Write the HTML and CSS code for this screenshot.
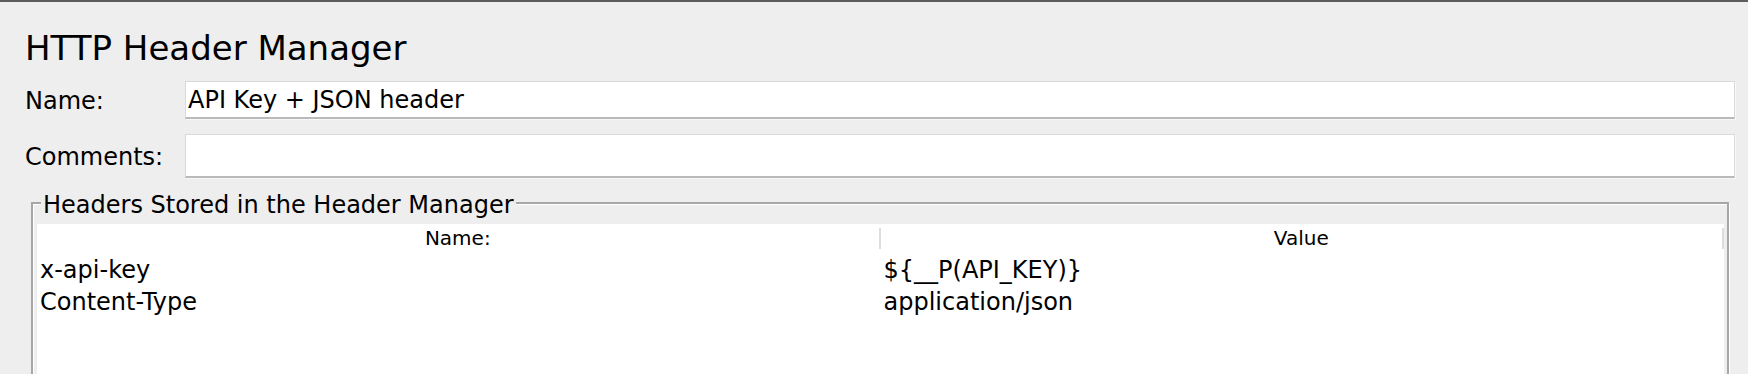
FILE: index.html
```html
<!DOCTYPE html>
<html lang="en">
<head>
<meta charset="utf-8">
<title>HTTP Header Manager</title>
<link rel="stylesheet" href="styles.css">
</head>
<body>
<div class="window">
  <h1 class="title">HTTP Header Manager</h1>
  <div class="form-row">
    <label class="label">Name:</label>
    <div class="field field-name">API Key + JSON header</div>
  </div>
  <div class="form-row">
    <label class="label">Comments:</label>
    <div class="field field-comments"></div>
  </div>
  <section class="group">
    <span class="group-title">Headers Stored in the Header Manager</span>
    <div class="table">
      <div class="thead">
        <div class="th"><span>Name:</span></div>
        <div class="th"><span>Value</span></div>
      </div>
      <div class="tr">
        <div class="td">x-api-key</div>
        <div class="td">${__P(API_KEY)}</div>
      </div>
      <div class="tr">
        <div class="td">Content-Type</div>
        <div class="td">application/json</div>
      </div>
    </div>
  </section>
</div>
</body>
</html>
```
FILE: styles.css
```css
html, body {
  margin: 0;
  height: 100%;
  overflow: hidden;
}

body {
  background: #eeeeee;
  font-family: "DejaVu Sans", "Liberation Sans", sans-serif;
  color: #000;
}

.window {
  box-sizing: border-box;
  height: 374px;
  overflow: hidden;
  border-top: 2px solid #5c5c5c;
  padding: 0 13px 0 25px;
}

.title {
  margin: 27px 0 0;
  font-size: 34px;
  font-weight: normal;
  line-height: 38px;
}

.form-row {
  display: flex;
  align-items: center;
  margin-top: 14px;
}

.form-row + .form-row {
  margin-top: 15px;
}

.label {
  flex: none;
  width: 160px;
  font-size: 24px;
  padding-top: 1px;
}

.field {
  flex: 1;
  display: flex;
  align-items: center;
  box-sizing: border-box;
  background: #fff;
  border: 1px solid #d9d9d9;
  border-bottom: 2px solid #bababa;
  box-shadow: 1px 1px 0 #f8f8f8;
  padding: 1px 0 0 2px;
  font-size: 24px;
}

.field-name {
  height: 38px;
}

.field-comments {
  height: 44px;
}

.group {
  position: relative;
  margin: 24px 6px 0;
  border: 2px solid #a6a6a6;
  box-shadow: inset 1px 1px 0 #fff, 1px 1px 0 #fff;
  padding: 20px 3px 0 4px;
}

.group-title {
  position: absolute;
  top: -13px;
  left: 8px;
  padding: 0 2px;
  background: #eeeeee;
  font-size: 24px;
  line-height: 28px;
}

.table {
  background: #fff;
  height: 200px;
}

.thead,
.tr {
  display: grid;
  grid-template-columns: 1fr 1fr;
}

.th {
  padding: 4px 0 5px;
  font-size: 20px;
  text-align: center;
}

.th span {
  display: block;
  line-height: 21px;
  border-right: 2px solid #dddddd;
}

.td {
  padding-left: 3px;
  font-size: 24px;
  line-height: 32px;
}
```
